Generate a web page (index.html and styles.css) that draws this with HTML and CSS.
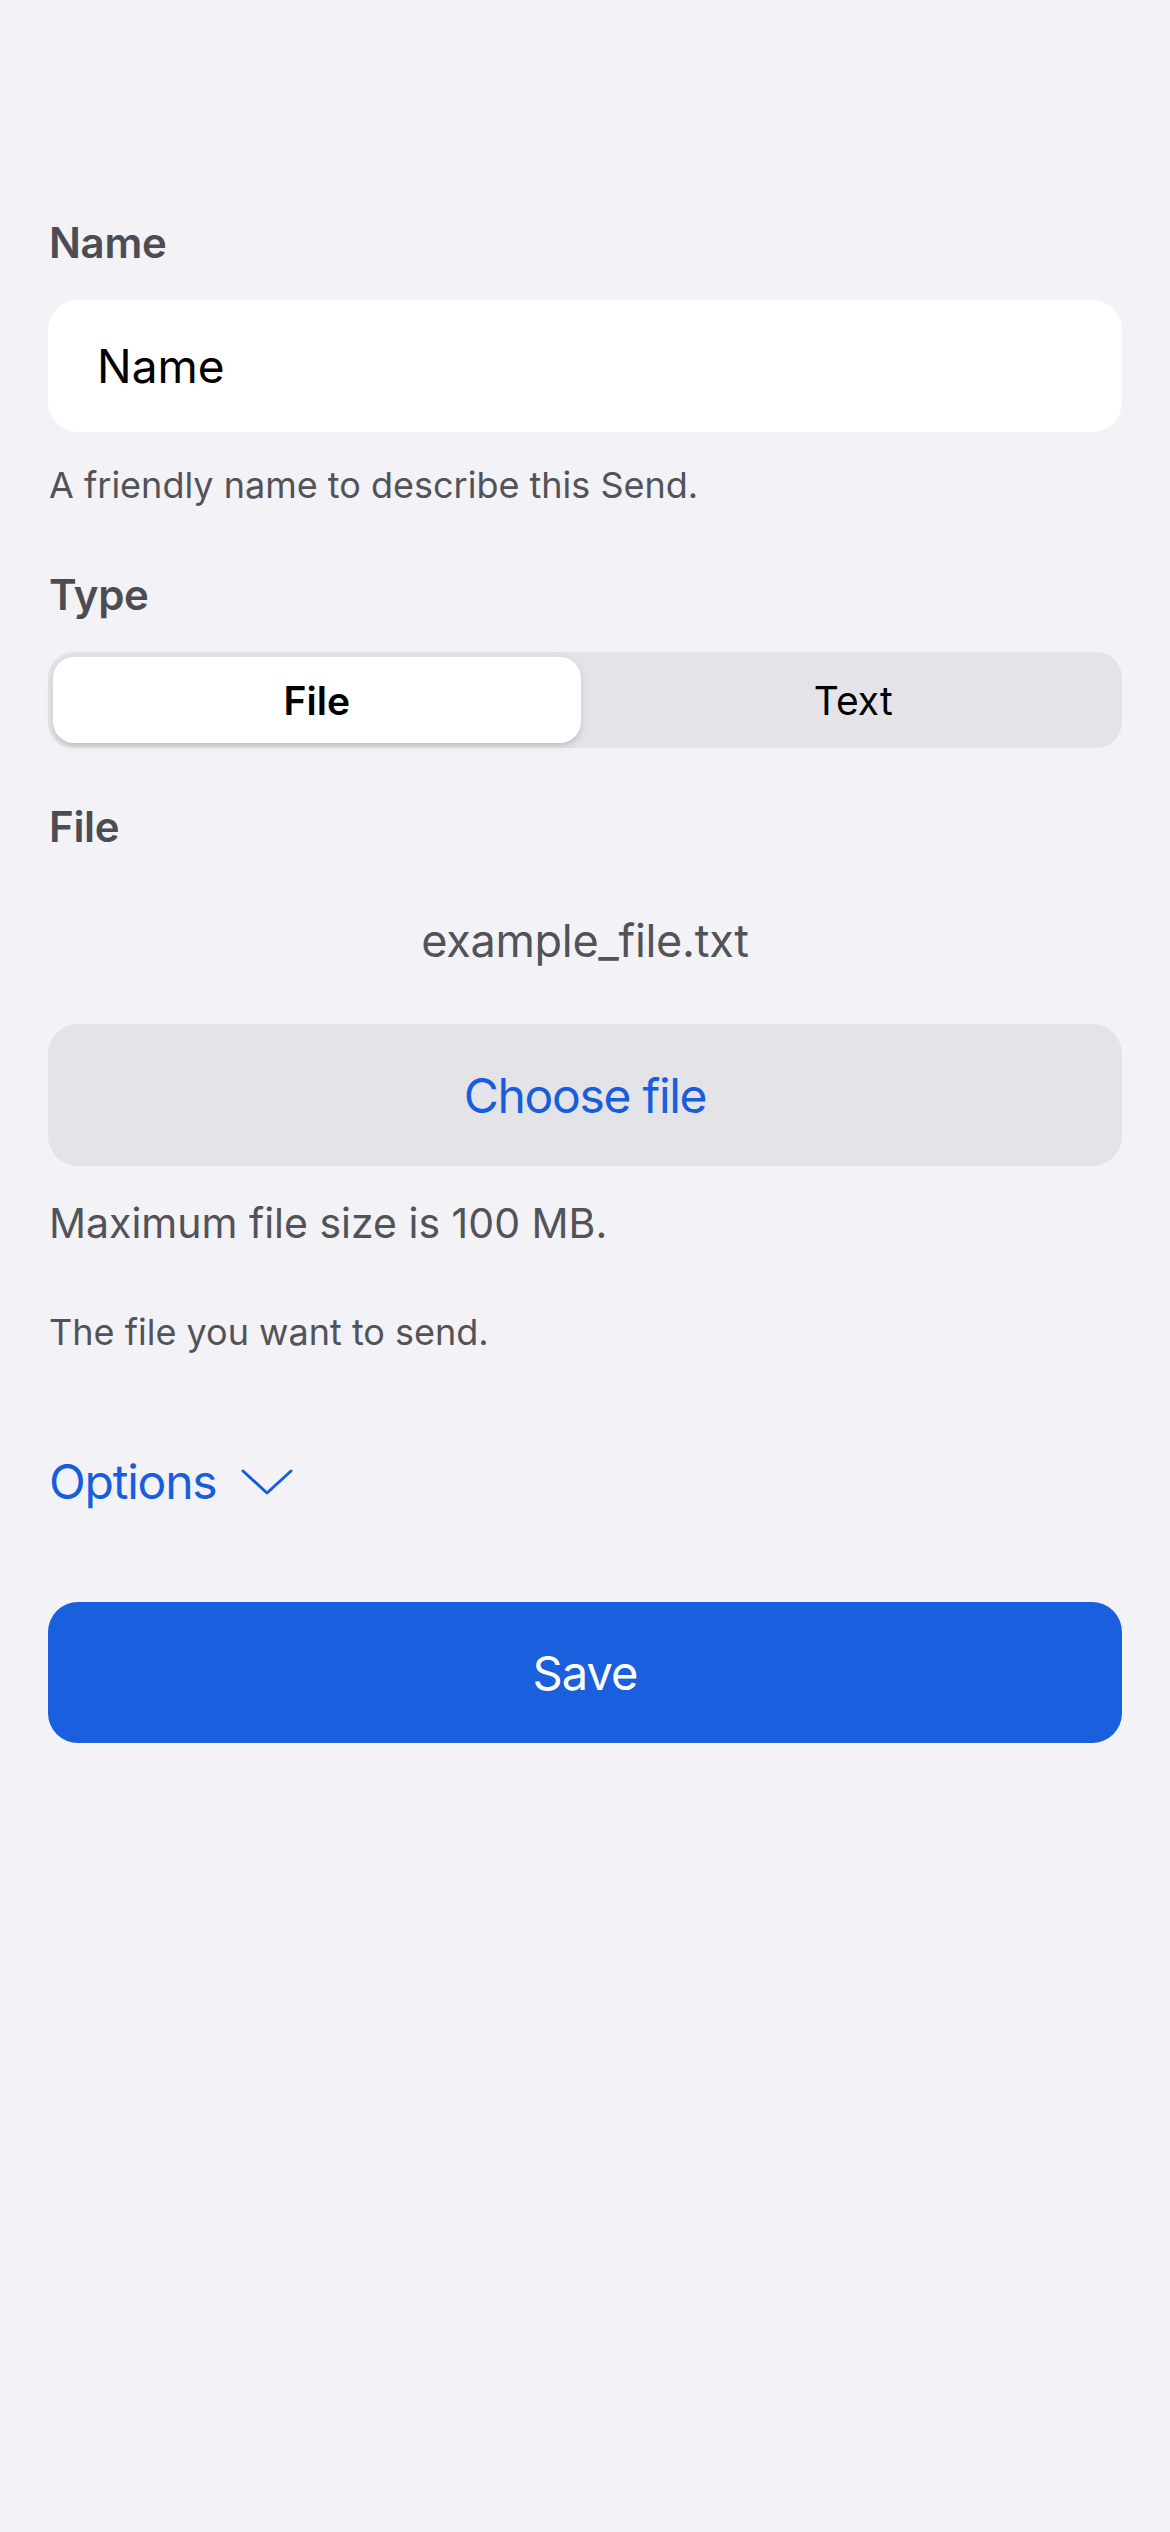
FILE: index.html
```html
<!DOCTYPE html>
<html lang="en">
<head>
<meta charset="utf-8">
<title>Send</title>
<link rel="stylesheet" href="styles.css">
</head>
<body>
<main class="form">
  <section class="field field-name">
    <div class="label">Name</div>
    <div class="input"><span class="input-text">Name</span></div>
    <div class="hint hint-name">A friendly name to describe this Send.</div>
  </section>

  <section class="field field-type">
    <div class="label">Type</div>
    <div class="segmented">
      <div class="segment selected">File</div>
      <div class="segment">Text</div>
    </div>
  </section>

  <section class="field field-file">
    <div class="label">File</div>
    <div class="filename">example_file.txt</div>
    <div class="choose">Choose file</div>
    <div class="maxsize">Maximum file size is 100 MB.</div>
    <div class="hint hint-file">The file you want to send.</div>
  </section>

  <div class="options">
    <span class="options-text">Options</span>
    <svg class="chevron" width="52" height="28" viewBox="0 0 52 28" aria-hidden="true">
      <polyline points="2,3 26,25 50,3" fill="none" stroke="#175ddc" stroke-width="3" stroke-linecap="round" stroke-linejoin="round"/>
    </svg>
  </div>

  <div class="save">Save</div>
</main>
</body>
</html>
```

FILE: styles.css
```css
* { box-sizing: border-box; }

html, body {
  margin: 0;
  padding: 0;
  background: #f2f2f7;
}

body {
  font-family: Inter, "Noto Sans", "Liberation Sans", sans-serif;
  color: #000;
  min-height: 2532px;
}

.form {
  padding: 218px 48px 0 48px;
  display: flex;
  flex-direction: column;
}

.label {
  font-size: 42px;
  line-height: 50px;
  font-weight: 600;
  color: #4c4c52;
  padding-left: 1px;
  letter-spacing: -0.3px;
}

.input {
  margin-top: 32px;
  height: 132px;
  background: #ffffff;
  border-radius: 30px;
  display: flex;
  align-items: center;
  padding-left: 49px;
}

.input-text {
  font-size: 46px;
  line-height: 54px;
  color: #000;
}

.hint {
  font-size: 36px;
  line-height: 43px;
  color: #525258;
  padding-left: 1px;
}

.hint-name { margin-top: 32px; }

.field-type { margin-top: 63px; }

.segmented {
  margin-top: 32px;
  height: 96px;
  background: #e3e3e8;
  border-radius: 26px;
  padding: 5px;
  display: grid;
  grid-template-columns: 1fr 1fr;
  column-gap: 9px;
}

.segment {
  display: flex;
  align-items: center;
  justify-content: center;
  font-size: 39px;
  color: #000;
  border-radius: 21px;
}

.segment.selected {
  background: #ffffff;
  font-weight: 600;
  box-shadow: 0 3px 8px rgba(0, 0, 0, 0.12), 0 3px 1px rgba(0, 0, 0, 0.04);
}

.field-file { margin-top: 54px; }

.filename {
  margin-top: 62px;
  font-size: 45px;
  line-height: 54px;
  color: #525258;
  text-align: center;
  letter-spacing: -0.3px;
}

.choose {
  margin-top: 56px;
  height: 142px;
  background: #e3e3e8;
  border-radius: 30px;
  display: flex;
  align-items: center;
  justify-content: center;
  font-size: 48px;
  letter-spacing: -1.3px;
  color: #175ddc;
}

.maxsize {
  margin-top: 33px;
  font-size: 41px;
  line-height: 48px;
  color: #525258;
  padding-left: 1px;
}

.hint-file { margin-top: 64px; }

.options {
  margin-top: 97px;
  display: flex;
  align-items: center;
  height: 61px;
  color: #175ddc;
  padding-left: 1px;
}

.options-text {
  font-size: 48px;
  letter-spacing: -1.2px;
  line-height: 61px;
}

.chevron {
  margin-left: 24px;
  margin-top: 0px;
}

.save {
  margin-top: 90px;
  height: 141px;
  background: #1a5fdd;
  border-radius: 30px;
  display: flex;
  align-items: center;
  justify-content: center;
  font-size: 47px;
  letter-spacing: -1px;
  color: #ffffff;
}
```
